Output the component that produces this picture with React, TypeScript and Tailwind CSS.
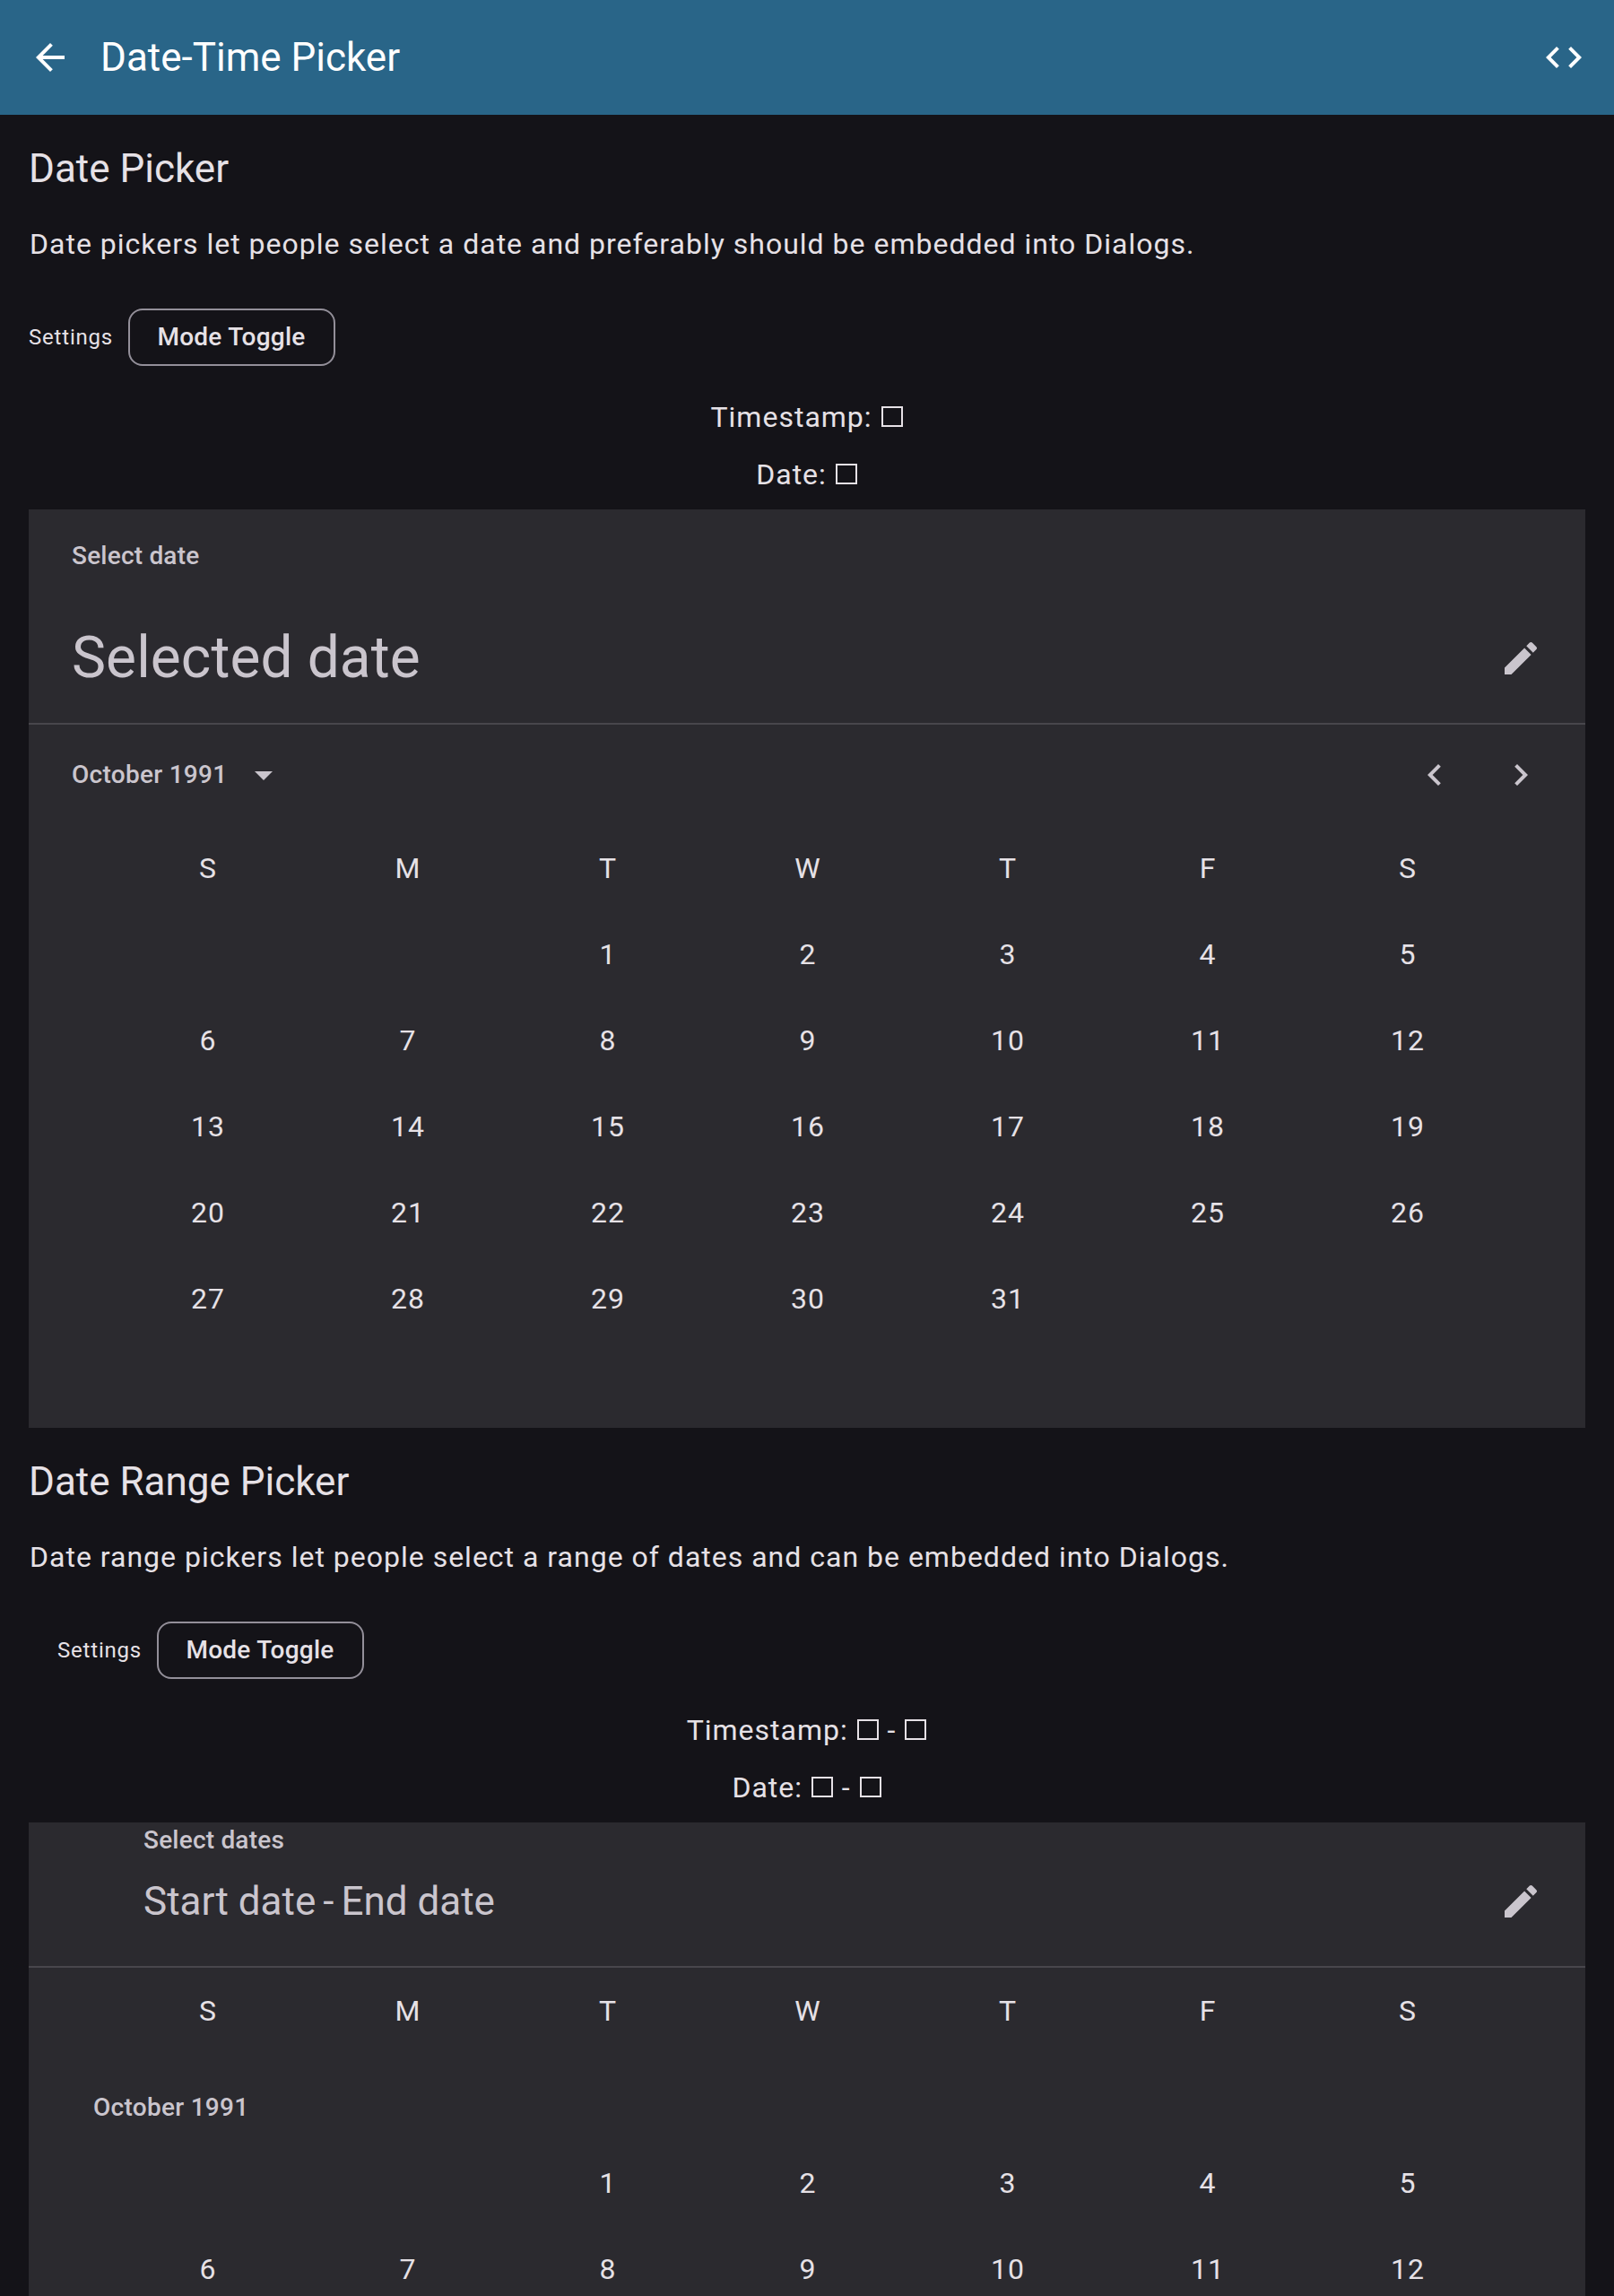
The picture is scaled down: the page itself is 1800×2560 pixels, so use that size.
import React from "react";

const WEEKDAYS = ["S", "M", "T", "W", "T", "F", "S"];

const OCTOBER_1991: (number | null)[] = [
  null,
  null,
  ...Array.from({ length: 31 }, (_, i) => i + 1),
];

function Icon({ d, className = "" }: { d: string; className?: string }) {
  return (
    <svg viewBox="0 0 24 24" className={`block size-12 shrink-0 fill-current ${className}`}>
      <path d={d} />
    </svg>
  );
}

const ARROW_BACK = "M20 11H7.83l5.59-5.59L12 4l-8 8 8 8 1.41-1.41L7.83 13H20v-2z";
const CODE =
  "M9.4 16.6 4.8 12l4.6-4.6L8 6l-6 6 6 6 1.4-1.4zm5.2 0 4.6-4.6-4.6-4.6L16 6l6 6-6 6-1.4-1.4z";
const EDIT =
  "M3 17.25V21h3.75L17.81 9.94l-3.75-3.75L3 17.25zM20.71 7.04c.39-.39.39-1.02 0-1.41l-2.34-2.34c-.39-.39-1.02-.39-1.41 0l-1.83 1.83 3.75 3.75 1.83-1.83z";
const DROP_DOWN = "M7 10l5 5 5-5z";
const CHEVRON_LEFT = "M15.41 16.59 10.83 12l4.58-4.59L14 6l-6 6 6 6 1.41-1.41z";
const CHEVRON_RIGHT = "M8.59 16.59 13.17 12 8.59 7.41 10 6l6 6-6 6-1.41-1.41z";

/* Placeholder glyph shown while no value is selected. */
function EmptyValue() {
  return (
    <span className="mx-px inline-block h-[23px] w-6 border-2 border-[#e6e1e6]" />
  );
}

function IntroSection({
  title,
  description,
  indent = false,
  range = false,
}: {
  title: string;
  description: string;
  indent?: boolean;
  range?: boolean;
}) {
  return (
    <div className="flex flex-col px-8 pt-8 pb-[15px]">
      <h2 className="text-[44px] leading-14">{title}</h2>
      <p className="mt-8 pl-px text-[32px] leading-12 tracking-[1px]">{description}</p>
      <div className={`mt-12 flex h-16 items-center ${indent ? "pl-8" : ""}`}>
        <span className="w-[111px] text-2xl tracking-[0.8px]">Settings</span>
        <button className="flex h-16 w-[231px] items-center justify-center rounded-2xl border-2 border-[#938f99] pr-px text-[28px] font-medium tracking-[0.25px]">
          Mode Toggle
        </button>
      </div>
      <div className="mt-[33px] flex flex-col items-center gap-4 text-[32px] leading-12 tracking-[1px]">
        {["Timestamp", "Date"].map((label) => (
          <p key={label} className="h-12 whitespace-nowrap">
            {label}: <EmptyValue />
            {range && (
              <>
                {" - "}
                <EmptyValue />
              </>
            )}
          </p>
        ))}
      </div>
    </div>
  );
}

function CellRow({ cells }: { cells: (string | number | null)[] }) {
  return (
    <div className="flex justify-evenly px-6">
      {cells.map((c, i) => (
        <div
          key={i}
          className="flex size-24 shrink-0 items-center justify-center pl-0.5 text-[32px] tracking-[1px] text-[#e6e1e6]"
        >
          {c}
        </div>
      ))}
    </div>
  );
}

function Month({ days, weeks = 6 }: { days: (number | null)[]; weeks?: number }) {
  const rows = Array.from({ length: weeks }, (_, r) =>
    Array.from({ length: 7 }, (_, c) => days[r * 7 + c] ?? null),
  );
  return (
    <div>
      {rows.map((row, i) => (
        <CellRow key={i} cells={row} />
      ))}
    </div>
  );
}

export default function App() {
  return (
    <div
      className="flex h-[2560px] w-[1800px] flex-col overflow-hidden bg-[#141318] text-[#e6e1e6]"
      style={{ fontFamily: 'Roboto, "Liberation Sans", sans-serif' }}
    >
      <header className="flex h-32 shrink-0 items-center bg-[#296588] px-8 text-white">
        <Icon d={ARROW_BACK} />
        <h1 className="ml-8 flex-1 text-[44px] leading-14">Date-Time Picker</h1>
        <Icon d={CODE} />
      </header>

      <section className="shrink-0">
        <IntroSection
          title="Date Picker"
          description="Date pickers let people select a date and preferably should be embedded into Dialogs."
        />
        <div className="mx-8 h-[1024px] bg-[#2b2a2f] text-[#cac5cd]">
          <div className="flex h-60 flex-col justify-between border-b-2 border-[#48464c] pt-8 pr-12 pb-6 pl-12">
            <p className="text-[28px] leading-10 font-medium tracking-[0.2px]">Select date</p>
            <div className="flex h-24 items-center justify-between">
              <p className="text-[64px] leading-20 tracking-[0.1px]">Selected date</p>
              <Icon d={EDIT} />
            </div>
          </div>
          <div className="flex h-28 items-center pr-12 pl-12">
            <span className="w-[190px] text-[28px] font-medium tracking-[0.28px]">October 1991</span>
            <Icon d={DROP_DOWN} className="mr-auto" />
            <Icon d={CHEVRON_LEFT} className="mr-12" />
            <Icon d={CHEVRON_RIGHT} />
          </div>
          <CellRow cells={WEEKDAYS} />
          <Month days={OCTOBER_1991} />
        </div>
      </section>

      <section className="flex flex-1 flex-col">
        <IntroSection
          title="Date Range Picker"
          description="Date range pickers let people select a range of dates and can be embedded into Dialogs."
          indent
          range
        />
        <div className="mx-8 flex-1 bg-[#2b2a2f] text-[#cac5cd]">
          <div className="h-[162px] border-b-2 border-[#48464c] pr-12 pl-32">
            <p className="text-[28px] leading-10 font-medium tracking-[0.2px]">Select dates</p>
            <div className="flex h-24 items-center text-[44px] leading-14">
              <span>Start date</span>
              <span className="mx-2">-</span>
              <span>End date</span>
              <Icon d={EDIT} className="ml-auto" />
            </div>
          </div>
          <CellRow cells={WEEKDAYS} />
          <p className="pt-10 pb-4 pl-[72px] text-[28px] leading-10 font-medium tracking-[0.28px]">
            October 1991
          </p>
          <Month days={OCTOBER_1991} weeks={2} />
        </div>
      </section>
    </div>
  );
}
